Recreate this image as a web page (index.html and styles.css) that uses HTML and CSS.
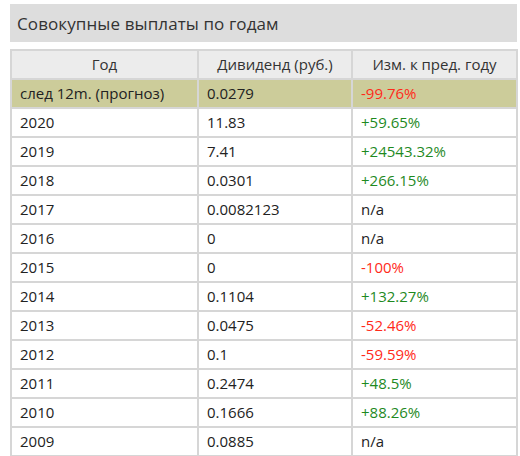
FILE: index.html
```html
<!DOCTYPE html>
<html lang="ru">
<head>
<meta charset="utf-8">
<link rel="stylesheet" href="styles.css">
</head>
<body>
<div class="panel">
  <div class="title">Совокупные выплаты по годам</div>
  <table class="divs">
    <thead>
      <tr><th class="c1">Год</th><th class="c2">Дивиденд (руб.)</th><th class="c3">Изм. к пред. году</th></tr>
    </thead>
    <tbody>
      <tr class="hl"><td>след 12m. (прогноз)</td><td>0.0279</td><td class="neg">-99.76%</td></tr>
      <tr><td>2020</td><td>11.83</td><td class="pos">+59.65%</td></tr>
      <tr><td>2019</td><td>7.41</td><td class="pos">+24543.32%</td></tr>
      <tr><td>2018</td><td>0.0301</td><td class="pos">+266.15%</td></tr>
      <tr><td>2017</td><td>0.0082123</td><td>n/a</td></tr>
      <tr><td>2016</td><td>0</td><td>n/a</td></tr>
      <tr><td>2015</td><td>0</td><td class="neg">-100%</td></tr>
      <tr><td>2014</td><td>0.1104</td><td class="pos">+132.27%</td></tr>
      <tr><td>2013</td><td>0.0475</td><td class="neg">-52.46%</td></tr>
      <tr><td>2012</td><td>0.1</td><td class="neg">-59.59%</td></tr>
      <tr><td>2011</td><td>0.2474</td><td class="pos">+48.5%</td></tr>
      <tr><td>2010</td><td>0.1666</td><td class="pos">+88.26%</td></tr>
      <tr><td>2009</td><td>0.0885</td><td>n/a</td></tr>
    </tbody>
  </table>
</div>
</body>
</html>
```

FILE: styles.css
```css
html, body {
  margin: 0;
  padding: 0;
  background: #ffffff;
}
body {
  padding: 4px 3px 0 10px;
  font-family: "Open Sans", "Liberation Sans", sans-serif;
  color: #222222;
}
.panel {
  width: 507px;
}
.title {
  background: #dddddd;
  height: 38px;
  box-sizing: border-box;
  padding: 0 7px;
  display: flex;
  align-items: center;
  font-size: 17px;
  letter-spacing: 0.1px;
  color: #333333;
}
.divs {
  margin-top: 7px;
  width: 506px;
  border-collapse: collapse;
  font-size: 15px;
  table-layout: fixed;
}
.divs th, .divs td {
  border: 2px solid #d6d6d6;
  height: 29px;
  box-sizing: border-box;
  padding: 0 8px;
  line-height: 1;
}
.divs th {
  background: #ececec;
  font-weight: normal;
  text-align: center;
  color: #333333;
}
.divs td {
  text-align: left;
}
.c1 { width: 187px; }
.c2 { width: 154px; }
.c3 { width: 165px; }
.hl td {
  background: #cccc9a;
}
.neg { color: #ff2a1a; }
.pos { color: #1f8a1f; }
```
